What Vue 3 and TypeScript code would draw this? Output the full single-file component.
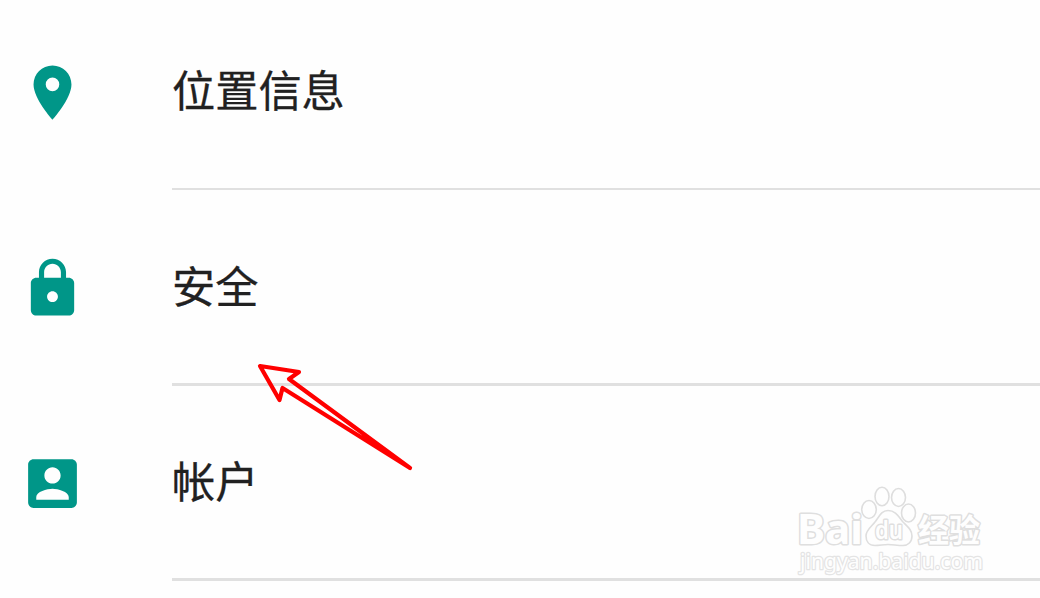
<script setup lang="ts">
interface SettingItem {
  id: string
  label: string
  path: string
}

const items: SettingItem[] = [
  {
    id: 'location',
    label: '位置信息',
    path: 'M12 2C8.13 2 5 5.13 5 9c0 5.25 7 13 7 13s7-7.75 7-13c0-3.87-3.13-7-7-7zm0 9.5a2.5 2.5 0 0 1 0-5 2.5 2.5 0 0 1 0 5z',
  },
  {
    id: 'security',
    label: '安全',
    path: 'M18 8h-1V6c0-2.76-2.24-5-5-5S7 3.24 7 6v2H6c-1.1 0-2 .9-2 2v10c0 1.1.9 2 2 2h12c1.1 0 2-.9 2-2V10c0-1.1-.9-2-2-2zm-6 9c-1.1 0-2-.9-2-2s.9-2 2-2 2 .9 2 2-.9 2-2 2zm3.1-9H8.9V6c0-1.71 1.39-3.1 3.1-3.1 1.71 0 3.1 1.39 3.1 3.1v2z',
  },
  {
    id: 'accounts',
    label: '帐户',
    path: 'M3 5v14c0 1.1.89 2 2 2h14c1.1 0 2-.9 2-2V5c0-1.1-.9-2-2-2H5c-1.11 0-2 .9-2 2zm12 4c0 1.66-1.34 3-3 3s-3-1.34-3-3 1.34-3 3-3 3 1.34 3 3zm-9 8c0-2 4-3.1 6-3.1s6 1.1 6 3.1v1H6v-1z',
  },
]
</script>

<template>
  <main class="screen">
    <ul class="list">
      <li v-for="item in items" :key="item.id" class="row" :class="item.id">
        <svg class="icon" viewBox="0 0 24 24" aria-hidden="true">
          <path :d="item.path" />
        </svg>
        <div class="content">
          <span class="label">{{ item.label }}</span>
        </div>
      </li>
    </ul>

    <svg class="arrow" viewBox="0 0 170 120" aria-hidden="true">
      <path d="M160 118 32.5 38 29.5 50 10 16 49 22 39 29Z" />
    </svg>

    <svg class="watermark" viewBox="0 0 215 115" aria-hidden="true">
      <g class="letters">
        <text class="brand" x="12" y="68.5" textLength="66" lengthAdjust="spacingAndGlyphs">Bai</text>
        <text class="cn" x="133" y="66.5" textLength="62" lengthAdjust="spacingAndGlyphs">经验</text>
        <text class="site" x="15" y="94" textLength="183" lengthAdjust="spacingAndGlyphs">jingyan.baidu.com</text>
      </g>
      <g class="paw">
        <ellipse cx="84" cy="34.5" rx="7.3" ry="9" />
        <ellipse cx="97" cy="21.5" rx="7" ry="9.3" />
        <ellipse cx="113.5" cy="22.5" rx="7" ry="9" />
        <ellipse cx="123.5" cy="38" rx="7" ry="9" />
        <path d="M103 35.5c8 0 11 7 15 11.5 5 5 9 8 9 14 0 6-4 9.5-9 9.5-6 0-10-1-15-1s-8 1-13 1c-6 0-9-4-9-9.5 0-6 5-9 9-14 4-5 6-11.5 13-11.5Z" />
      </g>
      <g class="letters">
        <text class="du" x="90" y="64" textLength="28" lengthAdjust="spacingAndGlyphs">du</text>
      </g>
    </svg>
  </main>
</template>

<style>
body {
  margin: 0;
  background: #fefefe;
}
</style>

<style scoped>
.screen {
  position: relative;
  width: 1040px;
  height: 598px;
  overflow: hidden;
  background: #fefefe;
  font-family: 'Noto Sans CJK SC', sans-serif;
}

.list {
  display: grid;
  grid-template-rows: 195px 196px 195px;
  margin: -5px 0 0;
  padding: 0;
  list-style: none;
}

.row {
  display: grid;
  grid-template-columns: 152px 1fr;
  align-items: center;
  padding-left: 20px;
}

.icon {
  width: 65px;
  height: 65px;
  fill: #009688;
}

.content {
  display: flex;
  align-items: center;
  align-self: stretch;
  box-sizing: border-box;
  padding-bottom: 6px;
  border-bottom: 3px solid #e0e0e0;
}

.location .content {
  padding-bottom: 7px;
  border-bottom-width: 2px;
}

.label {
  color: #212121;
  font-size: 43.2px;
  line-height: 60px;
  -webkit-text-stroke: 0.3px #212121;
}

.arrow {
  position: absolute;
  left: 250px;
  top: 350px;
  width: 170px;
  height: 120px;
  overflow: visible;
  fill: none;
  stroke: #f00;
  stroke-width: 4.2;
  stroke-linejoin: round;
}

.watermark {
  position: absolute;
  left: 785px;
  top: 475px;
  width: 215px;
  height: 115px;
}

.letters {
  fill: #fefefe;
  stroke: #dfdfdf;
  stroke-width: 3;
  stroke-linejoin: round;
  paint-order: stroke;
}

.paw {
  fill: #fefefe;
  stroke: #dedede;
  stroke-width: 1.6;
}

.brand,
.du,
.site {
  font-family: 'Noto Sans', sans-serif;
}

.brand {
  font-size: 41px;
  font-weight: 700;
}

.du {
  font-size: 25px;
  font-weight: 600;
}

.cn {
  font-family: 'Noto Sans CJK SC', sans-serif;
  font-size: 32px;
  font-weight: 700;
}

.site {
  font-size: 22px;
  stroke: #e4e4e4;
  stroke-width: 2.5;
}
</style>
